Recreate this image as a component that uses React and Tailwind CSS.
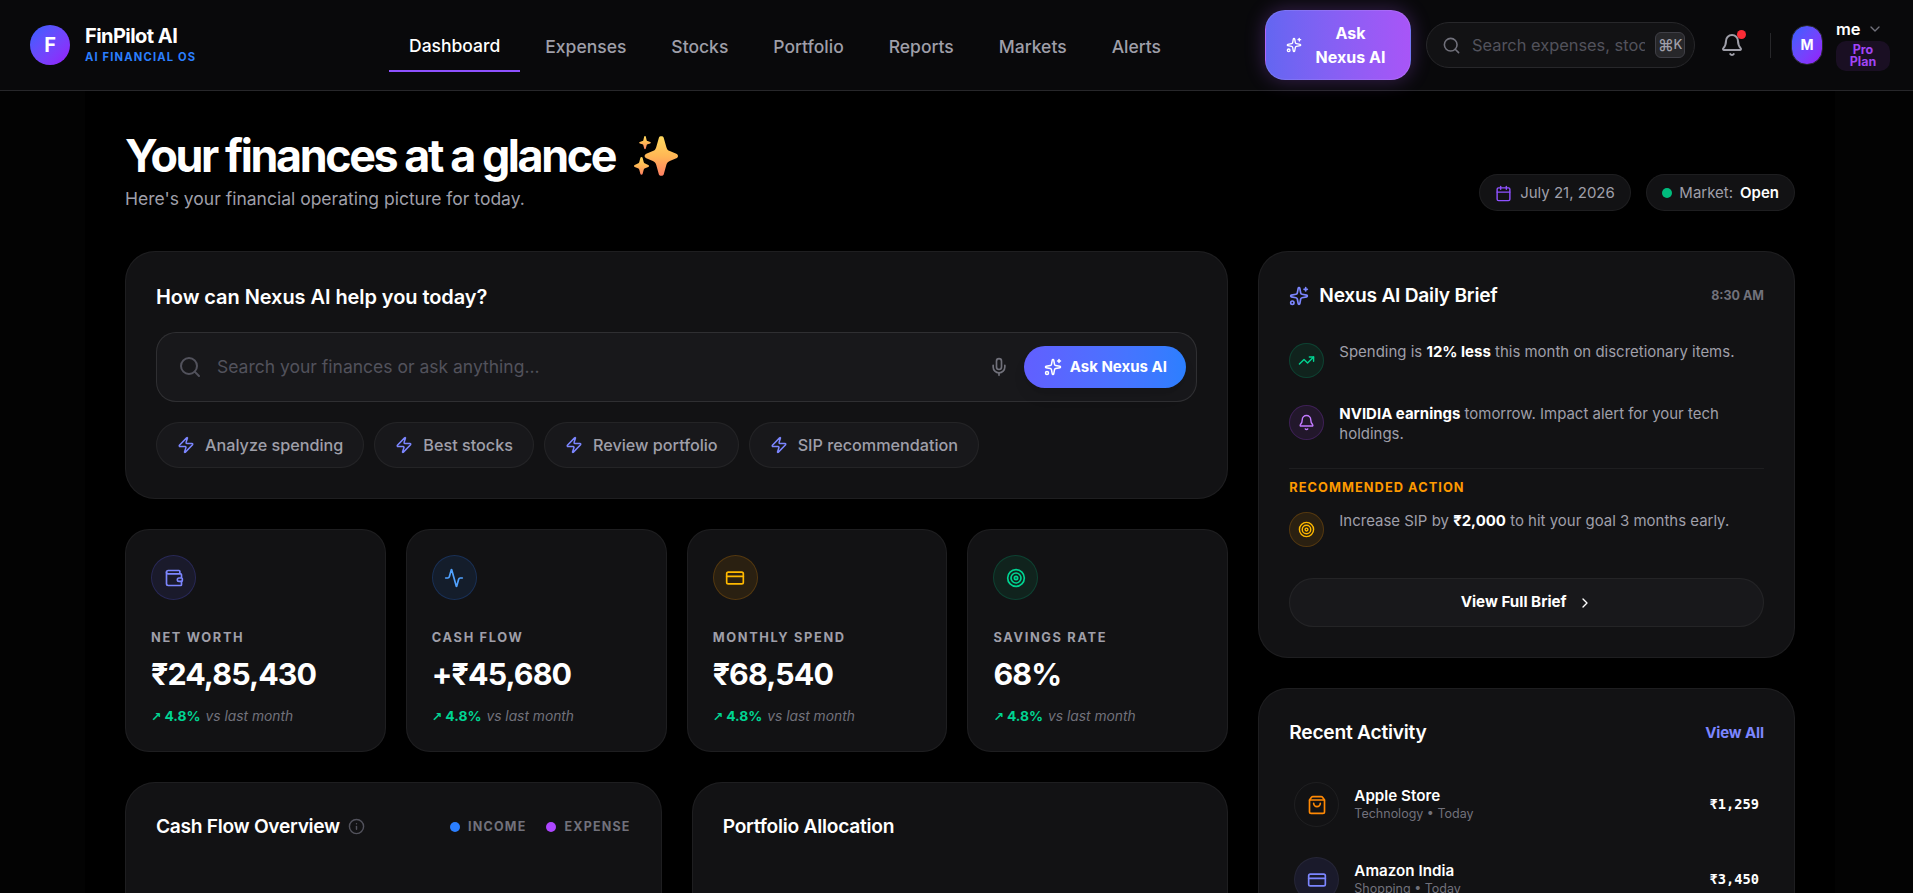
import {
  Activity, Bell, Calendar, ChevronDown, ChevronRight, CreditCard, Info, Mic,
  Search, ShoppingBag, Sparkles, Target, TrendingUp, Wallet, Zap,
} from 'lucide-react';

const NAV = ['Dashboard', 'Expenses', 'Stocks', 'Portfolio', 'Reports', 'Markets', 'Alerts'];

const PROMPTS = ['Analyze spending', 'Best stocks', 'Review portfolio', 'SIP recommendation'];

const STATS = [
  { label: 'Net Worth', value: '₹24,85,430', icon: Wallet, tone: 'text-[#7c86ff] bg-[#615fff]/10 border-[#615fff]/20' },
  { label: 'Cash Flow', value: '+₹45,680', icon: Activity, tone: 'text-[#51a2ff] bg-[#2b7fff]/10 border-[#2b7fff]/20' },
  { label: 'Monthly Spend', value: '₹68,540', icon: CreditCard, tone: 'text-[#ffb900] bg-[#fe9a00]/10 border-[#fe9a00]/20' },
  { label: 'Savings Rate', value: '68%', icon: Target, tone: 'text-[#00d492] bg-[#00bc7d]/10 border-[#00bc7d]/20' },
];

const ACTIVITY = [
  { name: 'Apple Store', meta: 'Technology • Today', amount: '₹1,259', icon: ShoppingBag, tone: 'text-[#ff8904]' },
  { name: 'Amazon India', meta: 'Shopping • Today', amount: '₹3,450', icon: CreditCard, tone: 'text-[#7c86ff] bg-[#615fff]/10' },
];

const CARD = 'bg-[#121214] border border-white/5 rounded-[30px]';

function SparkleEmoji() {
  return (
    <svg width="46" height="42" viewBox="0 0 46 42" className="mb-0.5 ml-[18px]">
      <defs>
        <linearGradient id="spark" x1="0" y1="0" x2="0" y2="1">
          <stop offset="0" stopColor="#ffd95e" />
          <stop offset="0.5" stopColor="#ffb755" />
          <stop offset="1" stopColor="#ff7f63" />
        </linearGradient>
      </defs>
      <g fill="url(#spark)">
        <path d="M25.9 2.7C26.4 .8 30.2 .8 30.7 2.7L33.4 12.2C34 14.3 34.8 15.2 36.8 16L43.3 18.7C45.6 19.8 45.6 22.2 43.3 23.3L36.8 26C34.8 26.8 34 27.7 33.4 29.8L30.7 39.4C30.2 41.2 26.4 41.2 25.9 39.4L23.2 29.8C22.6 27.7 21.8 26.8 19.8 26L13.3 23.3C11 22.2 11 19.8 13.3 18.7L19.8 16C21.8 15.2 22.6 14.3 23.2 12.2Z" />
        <path d="M11.2 1.6C11.4 .8 12.6 .8 12.8 1.6L13.6 5C13.8 5.7 14 5.9 14.6 6.1L17.2 7C18 7.4 18 8 17.2 8.4L14.6 9.3C14 9.5 13.8 9.7 13.6 10.4L12.8 13.6C12.6 14.4 11.4 14.4 11.2 13.6L10.4 10.4C10.2 9.7 10 9.5 9.4 9.3L6.8 8.4C6 8 6 7.4 6.8 7L9.4 6.1C10 5.9 10.2 5.7 10.4 5Z" />
        <path d="M7.4 22.7C7.7 21.7 9.3 21.7 9.6 22.7L10.7 27C11 27.9 11.3 28.2 12.1 28.5L15.3 29.9C16.3 30.4 16.3 31.4 15.3 31.9L12.1 33.2C11.3 33.5 11 33.9 10.7 34.7L9.6 39.1C9.3 40.1 7.7 40.1 7.4 39.1L6.3 34.7C6 33.9 5.7 33.5 4.9 33.2L1.7 31.9C.7 31.4 .7 30.4 1.7 29.9L4.9 28.5C5.7 28.2 6 27.9 6.3 27Z" />
      </g>
    </svg>
  );
}

function Header() {
  return (
    <header className="flex h-[91px] items-center border-b border-[#27272a] bg-[#09090b] px-[30px]">
      <div className="flex w-[359px] shrink-0 items-center gap-[15px]">
        <div className="flex size-10 items-center justify-center rounded-full bg-linear-to-br from-[#2b5fff] to-[#9514fa] text-xl font-bold">F</div>
        <div className="pb-0.5">
          <p className="text-xl leading-6 font-bold tracking-[-0.55px]">FinPilot AI</p>
          <p className="mt-px text-[11.2px] leading-4 font-bold tracking-[1.15px] text-[#2b7fff]">AI FINANCIAL OS</p>
        </div>
      </div>

      <nav className="flex shrink-0 items-center gap-[5px]">
        {NAV.map((item, i) => (
          <a
            key={item}
            href="#"
            className={`px-5 text-[17.5px] leading-[26px] font-medium ${
              i === 0
                ? 'mt-1 border-b-2 border-[#8e51ff] pb-[11px] pt-[11px] text-white'
                : 'pt-1 text-[#9f9fa9]'
            }`}
          >
            {item}
          </a>
        ))}
      </nav>

      <div className="ml-auto flex shrink-0 items-center">
        <button className="flex h-[70px] w-[146px] items-center justify-center gap-[13px] rounded-[20px] border border-white/10 bg-linear-to-r from-[#6366f1] to-[#a855f7] pr-1 text-base leading-6 font-bold shadow-[0_0_20px_rgba(168,85,247,0.3)]">
          <Sparkles className="size-4" />
          <span className="w-[71px]">Ask Nexus AI</span>
        </button>

        <div className="ml-[15px] flex h-[46px] w-[269px] items-center rounded-full border border-[#27272a] bg-[#121214] pl-[15px] pr-[9px]">
          <Search className="size-[19px] shrink-0 text-[#71717b]" />
          <span className="ml-[11px] w-[173px] shrink-0 overflow-hidden text-[16.4px] whitespace-nowrap text-[#52525c]">Search expenses, stoc</span>
          <kbd className="ml-auto flex h-[26px] w-[30px] items-center justify-center rounded-md border border-[#3f3f46] bg-[#27272a] font-['Inter',sans-serif] text-[13px] font-medium tracking-[-0.5px] text-[#9f9fa9]">
            <span className="text-base">⌘</span>K
          </kbd>
        </div>

        <div className="relative ml-[25px]">
          <Bell className="size-6 text-[#9f9fa9]" />
          <span className="absolute -top-[3px] -right-0.5 size-[9px] rounded-full bg-[#fb2c36]" />
        </div>
        <div className="ml-[26px] h-[25px] w-px bg-[#27272a]" />
        <div className="ml-5 flex h-10 w-8 items-center justify-center rounded-full border border-[#27272a] bg-linear-to-br from-[#2b5fff] to-[#9514fa] text-sm font-bold">M</div>
        <div className="ml-[13px] w-[54px]">
          <div className="flex h-[22px] items-center gap-1.5 pb-0.5">
            <span className="text-[16.5px] leading-5 font-semibold">me</span>
            <ChevronDown className="size-4 text-[#71717b]" />
          </div>
          <div className="rounded-[10px] bg-[#ad46ff]/10 px-2.5 py-[3px] text-center text-[12.5px] leading-3 font-bold text-[#a145f5]">Pro Plan</div>
        </div>
      </div>
    </header>
  );
}

function AskCard() {
  return (
    <section className={`${CARD} h-[248px] p-[30px]`}>
      <h2 className="text-xl leading-[30px] font-semibold tracking-[-0.07px]">How can Nexus AI help you today?</h2>
      <div className="mt-5 flex h-[70px] items-center rounded-[20px] border border-white/10 bg-[#18181b] pl-[21px] pr-2.5">
        <Search className="size-6 text-[#52525c]" />
        <span className="ml-[15px] text-[17.5px] text-[#52525c]">Search your finances or ask anything...</span>
        <Mic className="ml-auto size-5 text-[#71717b]" />
        <button className="ml-[15px] flex h-[42px] w-[162px] items-center justify-center gap-2 rounded-full bg-linear-to-r from-[#615fff] to-[#2b7fff] text-[15px] font-bold shadow-lg">
          <Sparkles className="size-[18px]" />
          Ask Nexus AI
        </button>
      </div>
      <div className="mt-5 flex gap-2.5">
        {PROMPTS.map(p => (
          <button key={p} className="flex h-[46px] items-center gap-2.5 rounded-full border border-white/5 bg-[#18181b] px-5 text-[16.2px] font-medium text-[#9f9fa9]">
            <Zap className="size-[18px] text-[#7c86ff]" />
            {p}
          </button>
        ))}
      </div>
    </section>
  );
}

function StatCard({ label, value, icon: Icon, tone }) {
  return (
    <div className="h-[223px] rounded-3xl border border-white/5 bg-[#121214] p-[25px]">
      <div className={`flex size-[45px] items-center justify-center rounded-full border ${tone}`}>
        <Icon className="size-5" />
      </div>
      <p className="mt-7 text-[12.8px] leading-5 font-bold tracking-[1.65px] text-[#9f9fa9] uppercase">{label}</p>
      <p className="mt-1.5 text-[30.4px] leading-10 font-bold tracking-[-0.9px]">{value}</p>
      <p className="mt-[11px] flex items-center gap-[5px] text-[13.8px] leading-5">
        <span className="flex items-center gap-[3px] font-bold text-[#00d492]">
          <span className="pt-0.5 font-['DejaVu_Sans',sans-serif] text-[12.5px] leading-5">↗</span>
          4.8%
        </span>
        <span className="text-[#71717b] italic">vs last month</span>
      </p>
    </div>
  );
}

function BriefItem({ icon: Icon, tone, children }) {
  return (
    <div className="flex gap-[15px]">
      <div className={`flex size-[35px] shrink-0 items-center justify-center rounded-full border ${tone}`}>
        <Icon className="size-[17px]" />
      </div>
      <p className="-mt-px text-[14.98px] leading-5 text-[#9f9fa9]">{children}</p>
    </div>
  );
}

function DailyBrief() {
  return (
    <section className={`${CARD} h-[407px] px-[30px] pt-[30px]`}>
      <div className="flex h-[27px] items-center">
        <Sparkles className="size-5 text-[#7c86ff]" />
        <h2 className="ml-2.5 text-[19.2px] font-semibold tracking-[-0.25px]">Nexus AI Daily Brief</h2>
        <span className="ml-auto pt-0.5 text-[12.5px] font-bold text-[#71717b]">8:30 AM</span>
      </div>
      <div className="mt-[34px] flex flex-col gap-[27px]">
        <BriefItem icon={TrendingUp} tone="text-[#00d492] bg-[#00bc7d]/10 border-[#00bc7d]/20">
          Spending is <b className="text-white">12% less</b> this month on discretionary items.
        </BriefItem>
        <BriefItem icon={Bell} tone="text-[#c27aff] bg-[#ad46ff]/10 border-[#ad46ff]/20">
          <b className="text-white">NVIDIA earnings</b> tomorrow. Impact alert for your tech holdings.
        </BriefItem>
      </div>
      <div className="mt-6 border-t border-white/5 pt-[9px]">
        <p className="text-[12.8px] leading-5 font-bold tracking-[1.05px] text-[#fe9a00]">RECOMMENDED ACTION</p>
        <div className="mt-[14px]">
          <BriefItem icon={Target} tone="text-[#ffb900] bg-[#fe9a00]/10 border-[#fe9a00]/20">
            Increase SIP by <b className="text-white">₹2,000</b> to hit your goal 3 months early.
          </BriefItem>
        </div>
      </div>
      <button className="mt-[31px] flex h-[49px] w-full items-center justify-center gap-2.5 rounded-full border border-white/5 bg-[#18181b] text-[15.2px] font-bold">
        View Full Brief
        <ChevronRight className="size-4" />
      </button>
    </section>
  );
}

function RecentActivity() {
  return (
    <section className={`${CARD} h-[400px] px-[30px] pt-[30px]`}>
      <div className="flex h-[27px] items-center justify-between">
        <h2 className="text-[19.2px] font-semibold tracking-[-0.25px]">Recent Activity</h2>
        <a href="#" className="pt-px text-[15px] font-bold tracking-[-0.1px] text-[#7c86ff]">View All</a>
      </div>
      <div className="mt-9 flex flex-col gap-[30px] px-[5px]">
        {ACTIVITY.map(({ name, meta, amount, icon: Icon, tone }) => (
          <div key={name} className="flex h-[45px] items-center">
            <div className={`flex size-[45px] items-center justify-center rounded-full border border-white/5 ${tone}`}>
              <Icon className="size-5" />
            </div>
            <div className="ml-[15px] pb-px">
              <p className="text-[15.2px] leading-[19px] font-semibold">{name}</p>
              <p className="text-[12.5px] leading-[18px] text-[#71717b]">{meta}</p>
            </div>
            <span className="ml-auto font-['DejaVu_Sans_Mono',monospace] text-[13.7px] font-bold">{amount}</span>
          </div>
        ))}
      </div>
    </section>
  );
}

export default function App() {
  return (
    <div className="h-[893px] overflow-hidden bg-[#030303] font-['Inter',sans-serif] text-white">
      {/* fixed canvas, a touch wider than the viewport */}
      <div className="w-[1920px]">
        <Header />
        <main className="mx-auto h-[1000px] w-[1750px] bg-black px-10 pt-[39px]">
          <div className="flex h-[121px] items-end justify-between">
            <div className="self-start">
              <h1 className="flex h-[54px] items-center text-[44.8px] font-bold tracking-[-2.4px]">
                Your finances at a glance
                <SparkleEmoji />
              </h1>
              <p className="mt-px text-[17.5px] leading-7 text-[#9f9fa9]">Here's your financial operating picture for today.</p>
            </div>
            <div className="mb-10 flex gap-[15px] text-[15px] text-[#9f9fa9]">
              <div className="flex h-[37px] items-center gap-2 rounded-full border border-white/5 bg-[#121214] px-[15.5px] pt-px">
                <Calendar className="size-[17px] text-[#8e51ff]" />
                July 21, 2026
              </div>
              <div className="flex h-[37px] items-center gap-[7px] rounded-full border border-white/5 bg-[#121214] px-[15px] pt-px">
                <span className="size-2.5 rounded-full bg-[#00bc7d]" />
                Market: <span className="font-semibold text-white">Open</span>
              </div>
            </div>
          </div>

          <div className="grid grid-cols-12 gap-[30px]">
            <div className="col-span-8 flex flex-col gap-[30px]">
              <AskCard />
              <div className="grid grid-cols-4 gap-5">
                {STATS.map(s => <StatCard key={s.label} {...s} />)}
              </div>
              <div className="grid grid-cols-2 gap-[30px]">
                <section className={`${CARD} h-[400px] px-[30px] pt-[30px]`}>
                  <div className="flex h-[27px] items-center">
                    <h2 className="text-[19.2px] font-semibold tracking-[-0.3px]">Cash Flow Overview</h2>
                    <Info className="ml-2 size-[17px] text-[#52525c]" />
                    <div className="ml-auto flex gap-5 pt-px text-[12.5px] font-bold tracking-[1.2px] text-[#71717b]">
                      <span className="flex items-center gap-2"><i className="size-2.5 rounded-full bg-[#2b7fff]" />INCOME</span>
                      <span className="flex items-center gap-2"><i className="size-2.5 rounded-full bg-[#ad46ff]" />EXPENSE</span>
                    </div>
                  </div>
                </section>
                <section className={`${CARD} h-[400px] px-[30px] pt-[30px]`}>
                  <h2 className="text-[19.2px] leading-[27px] font-semibold tracking-[-0.25px]">Portfolio Allocation</h2>
                </section>
              </div>
            </div>
            <div className="col-span-4 flex flex-col gap-[30px]">
              <DailyBrief />
              <RecentActivity />
            </div>
          </div>
        </main>
      </div>
    </div>
  );
}
